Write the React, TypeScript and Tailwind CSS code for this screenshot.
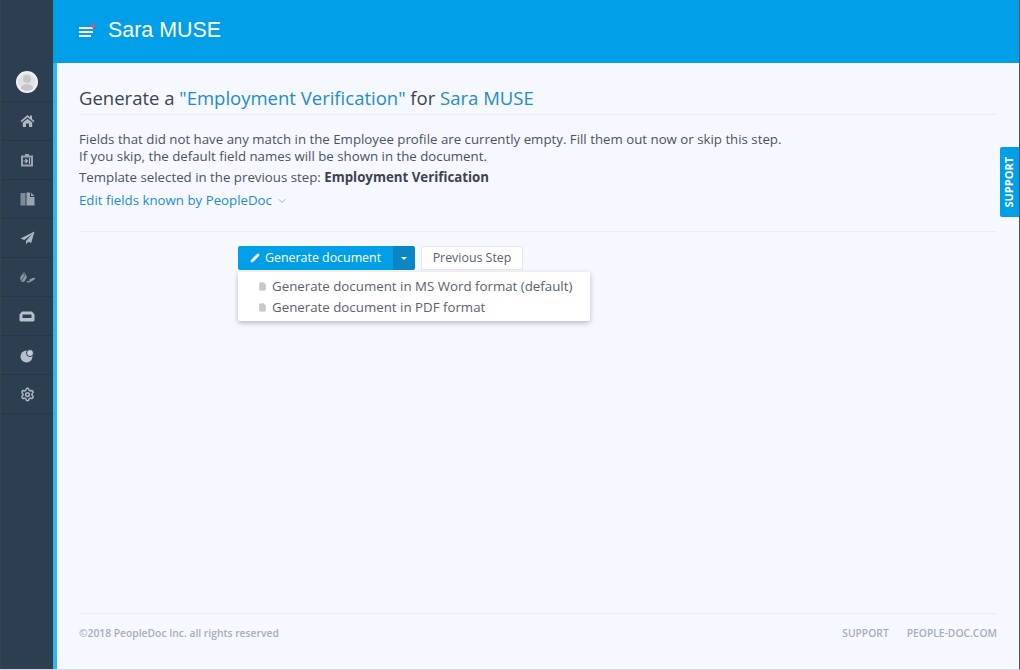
import React from "react";
import { ChevronDown, FileText, Pencil, Settings } from "lucide-react";

const font = "font-['Open_Sans',sans-serif]";

const HomeIcon = () => (
    <svg width="15" height="14" viewBox="0 0 15 14" fill="#aeb6c2">
        <path d="M7.5 1 0.5 7l1 1.2L7.5 3.2l6 5L14.500 7l-2.500-2.100V1.500h-2v1.700z" />
        <path d="M2.800 8.600 7.500 4.700l4.700 3.900V13H9V9.500H6V13H2.800z" />
    </svg>
);

const ImportIcon = () => (
    <svg width="14" height="14" viewBox="0 0 14 14" fill="none">
        <path d="M1 2.500h4V1h4v1.500h4V13.500H1z" fill="#9aa3b0" />
        <path d="M3 4.500h8v7H3z" fill="#2d3e50" />
        <path d="M3.500 8h4M5.500 6l2 2-2 2M9.500 5V11" stroke="#b8bfca" strokeWidth="1.100" />
    </svg>
);

const DocsIcon = () => (
    <svg width="15" height="14" viewBox="0 0 15 14" fill="#9aa3b0">
        <path d="M0.500 1h5v12.500h-5z" fill="#7f8997" />
        <path d="M6.500 0.500h3.500v4.500h4.500v8.500h-8z" />
        <path d="M11 0.500l3.500 3.500H11z" />
    </svg>
);

const SendIcon = () => (
    <svg width="15" height="14" viewBox="0 0 15 14" fill="#aeb6c2">
        <path d="M14.500 0.500 0.500 7.500l3.800 1.500L12 3 6 10v3.500l2.200-2.700 3 1.200z" />
    </svg>
);

const SignIcon = () => (
    <svg width="16" height="14" viewBox="0 0 16 14" fill="none">
        <path d="M5 1.500 1 8l1 4 3.500-.5 2.500-4.500z" fill="#8f98a6" />
        <path d="M5 1.500V5M1.500 12 6 5" stroke="#2d3e50" strokeWidth="0.800" />
        <path d="M8 11.500c2 .8 5-1 7.500-3-2 .2-3.500 1-5 1.500" stroke="#8f98a6" strokeWidth="1.400" />
    </svg>
);

const TrayIcon = () => (
    <svg width="16" height="11" viewBox="0 0 16 11" fill="#b8bfca">
        <path d="M3 0.500h10l2.500 3v5.500a1.500 1.500 0 0 1-1.500 1.500H2A1.500 1.500 0 0 1 .5 9V3.500zM3.500 3.500v3.500h9V3.500z" fillRule="evenodd" />
    </svg>
);

const PieIcon = () => (
    <svg width="15" height="15" viewBox="0 0 15 15" fill="#b8bfca">
        <circle cx="6.500" cy="8.500" r="6" />
        <circle cx="10" cy="5" r="3.500" fill="#c8ced8" stroke="#2d3e50" />
    </svg>
);

const navIcons = [
    <HomeIcon key="home" />,
    <ImportIcon key="import" />,
    <DocsIcon key="docs" />,
    <SendIcon key="send" />,
    <SignIcon key="sign" />,
    <TrayIcon key="tray" />,
    <PieIcon key="pie" />,
    <Settings key="settings" size={15} color="#aeb6c2" strokeWidth={2.4} />,
];

const Sidebar = () => (
    <aside className="flex w-[53px] shrink-0 flex-col border-l border-[#3a424c] bg-[#2d3e50] pt-[63px]">
        <div className="flex h-[39px] items-center justify-center border-b border-[#283746]">
            <div className="relative h-[22px] w-[22px] overflow-hidden rounded-full border-2 border-[#eef2f6] bg-[#e2e2e2]">
                <div className="absolute left-[5px] top-[2px] h-[8px] w-[8px] rounded-full bg-[#c6c6c6]" />
                <div className="absolute left-[2px] top-[11px] h-[9px] w-[14px] rounded-t-full bg-[#c6c6c6]" />
            </div>
        </div>
        {navIcons.map((icon, i) => (
            <div
                key={i}
                className="flex h-[39px] items-center justify-center border-b border-[#283746]"
            >
                {icon}
            </div>
        ))}
    </aside>
);

const Header = () => (
    <header className="flex h-[63px] shrink-0 items-center bg-[#009fe8] pb-[2px] pl-[26px]">
        <div className="relative mr-[15px] mt-[2px] flex w-[14px] flex-col gap-[2px]">
            <span className="h-[2px] bg-white" />
            <span className="h-[2px] bg-white" />
            <span className="h-[2px] w-[12px] bg-white" />
            <span className="absolute -right-[2px] -top-[3px] h-[4px] w-[4px] rounded-full bg-[#e8506a]" />
        </div>
        <span className="font-['Liberation_Sans',sans-serif] text-[21.400px] text-white">Sara MUSE</span>
    </header>
);

const Actions = () => (
    <div className="flex gap-[6px] pl-[159px]">
        <div className="relative flex h-[24px]">
            <button className="flex w-[155px] items-center gap-[5px] rounded-l-[2px] bg-[#009fe8] pl-[12px] text-[12.400px] font-medium text-white">
                <Pencil size={10} fill="white" strokeWidth={1.500} />
                Generate document
            </button>
            <button className="flex w-[22px] items-center justify-center rounded-r-[2px] bg-[#0a86c6]">
                <span className="border-x-[3px] border-t-[3px] border-x-transparent border-t-white" />
            </button>
            <div className="absolute left-0 top-[26px] z-10 flex h-[49px] w-[352px] flex-col justify-center gap-[5px] rounded-b-[2px] bg-white pl-[20px] text-[13.300px] font-medium text-[#5a6270] shadow-[0_2px_5px_rgba(60,70,90,0.35)]">
                <div className="flex items-center gap-[5px] leading-[16px]">
                    <FileText size={9} fill="#c8c8c8" color="#c8c8c8" />
                    Generate document in MS Word format (default)
                </div>
                <div className="flex items-center gap-[5px] leading-[16px]">
                    <FileText size={9} fill="#c8c8c8" color="#c8c8c8" />
                    Generate document in PDF format
                </div>
            </div>
        </div>
        <button className="h-[24px] w-[102px] rounded-[2px] border border-[#e2e6ee] bg-white text-[12.400px] font-medium text-[#5a6270]">
            Previous Step
        </button>
    </div>
);

const Footer = () => (
    <footer className="mt-auto flex h-[56px] items-center justify-between border-t border-[#e9edf4] pb-[16px] text-[10.300px] font-semibold text-[#a6adbb]">
        <span>©2018 PeopleDoc Inc. all rights reserved</span>
        <div className="flex gap-[18px]">
            <span>SUPPORT</span>
            <span>PEOPLE-DOC.COM</span>
        </div>
    </footer>
);

export default function App() {
    return (
        <div className={`${font} flex h-[670px] w-[1020px] overflow-hidden border-r border-b border-r-[#3f5870] border-b-[#d5d9e2] bg-[#f5f8ff]`}>
            <Sidebar />
            <div className="flex min-w-0 flex-1 flex-col">
                <Header />
                <main className="relative flex flex-1 flex-col border-l-[4px] border-[#2fb6f5] pl-[22px] pr-[22px]">
                    <h1 className="flex h-[52px] items-end border-b border-[#e9edf4] pb-[2px] text-[18.500px] text-[#3c4350]">
                        <span>
                            Generate a <span className="text-[#1f8ccb]">"Employment Verification"</span> for{" "}
                            <span className="text-[#1f8ccb]">Sara MUSE</span>
                        </span>
                    </h1>
                    <div className="h-[117px] border-b border-[#e9edf4] pt-[16px] text-[13.270px] text-[#4c5360]">
                        <p className="leading-[17px]">
                            Fields that did not have any match in the Employee profile are currently empty. Fill them out now or skip this step.
                            <br />
                            If you skip, the default field names will be shown in the document.
                        </p>
                        <p className="mt-[4px] leading-[17px]">
                            Template selected in the previous step: <b className="font-bold text-[#3c4350]">Employment Verification</b>
                        </p>
                        <p className="mt-[6px] flex items-center gap-[4px] leading-[17px] text-[#1f8ccb]">
                            Edit fields known by PeopleDoc
                            <ChevronDown size={12} color="#a6adbb" />
                        </p>
                    </div>
                    <div className="pt-[14px]">
                        <Actions />
                    </div>
                    <Footer />
                    <div className="absolute right-0 top-[84px] flex h-[70px] w-[19px] items-center justify-center rounded-l-[2px] bg-[#009fe8]">
                        <span className="-rotate-90 text-[11px] font-bold text-white">SUPPORT</span>
                    </div>
                </main>
            </div>
        </div>
    );
}
